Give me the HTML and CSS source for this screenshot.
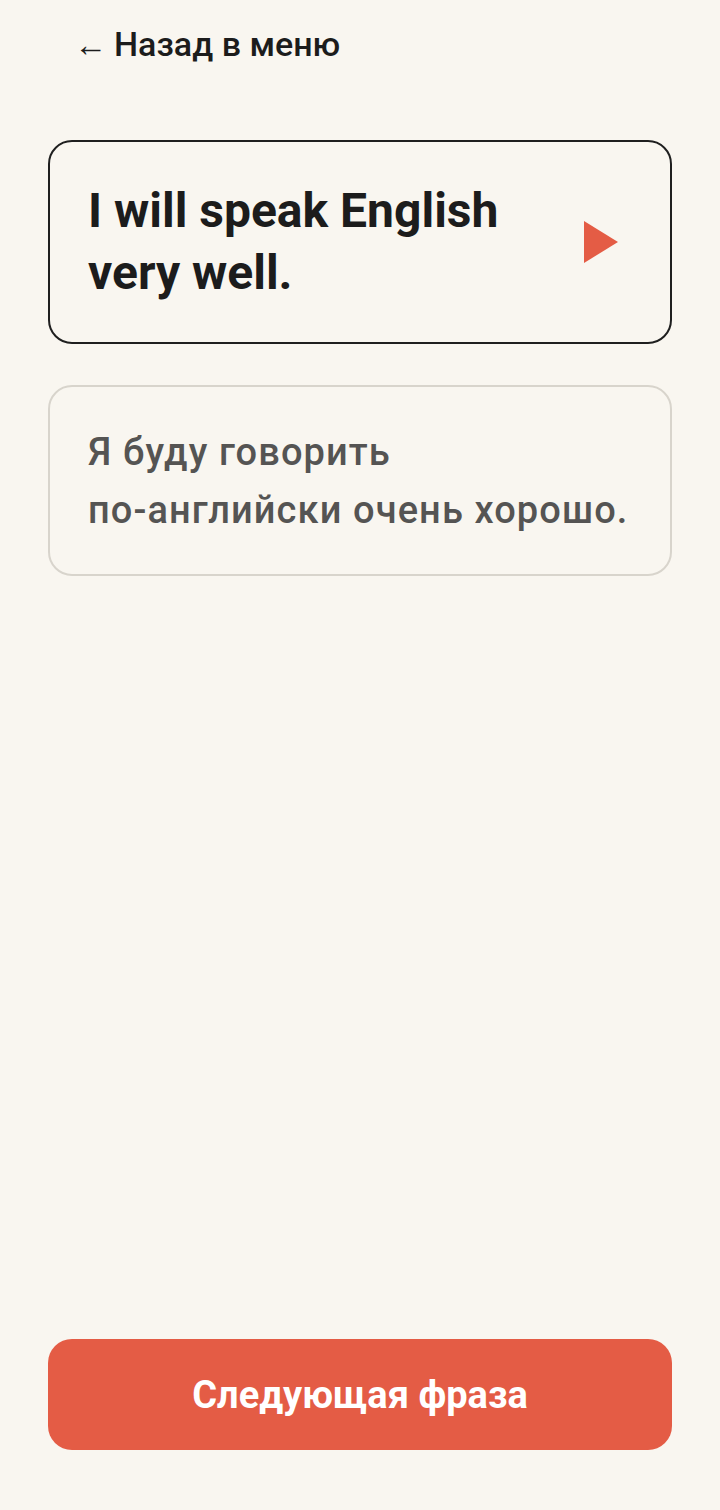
FILE: index.html
```html
<!DOCTYPE html>
<html lang="ru">
<head>
<meta charset="utf-8">
<link rel="stylesheet" href="styles.css">
</head>
<body>
<div class="screen">
  <a class="back" href="#"><span class="arrow">←</span><span>Назад в меню</span></a>
  <div class="card phrase">
    <div class="phrase-text">I will speak English very well.</div>
    <svg class="play" width="34" height="42" viewBox="0 0 34 42"><polygon points="0,0 34,21 0,42" fill="#e45c45"/></svg>
  </div>
  <div class="card translation">
    <div class="translation-text">Я буду говорить <span class="nowrap">по-английски</span> очень хорошо.</div>
  </div>
  <div class="spacer"></div>
  <button class="next">Следующая фраза</button>
</div>
</body>
</html>
```
FILE: styles.css
```css
html, body {
  margin: 0;
  padding: 0;
  background: #f9f6f0;
}
body {
  font-family: Roboto, "Liberation Sans", sans-serif;
}
.screen {
  height: 1510px;
  box-sizing: border-box;
  padding: 22px 48px 60px 48px;
  display: flex;
  flex-direction: column;
}
.back {
  height: 44px;
  display: flex;
  align-items: baseline;
  gap: 7px;
  color: #1c1c1c;
  text-decoration: none;
  font-size: 34px;
  font-weight: 500;
  line-height: 44px;
  padding-left: 26px;
}
.arrow {
  font-size: 33px;
  font-weight: 400;
}
.card {
  border-radius: 24px;
  box-sizing: border-box;
}
.phrase {
  margin-top: 74px;
  height: 204px;
  border: 2px solid #1f1f1f;
  display: flex;
  align-items: center;
  padding: 0 52px 0 38px;
}
.phrase-text {
  font-size: 48px;
  font-weight: 700;
  line-height: 62px;
  color: #1c1c1c;
  max-width: 430px;
}
.play {
  flex: none;
  margin-left: auto;
}
.translation {
  margin-top: 41px;
  height: 191px;
  border: 2px solid #d8d4cc;
  display: flex;
  align-items: center;
  padding: 0 38px;
}
.translation-text {
  font-size: 38px;
  font-weight: 500;
  line-height: 58px;
  color: #555453;
  letter-spacing: 1.1px;
}
.nowrap {
  white-space: nowrap;
}
.spacer {
  flex: 1;
}
.next {
  height: 111px;
  border: none;
  border-radius: 24px;
  background: #e45c45;
  color: #ffffff;
  font-family: Roboto, "Liberation Sans", sans-serif;
  font-size: 38px;
  font-weight: 700;
}
```
